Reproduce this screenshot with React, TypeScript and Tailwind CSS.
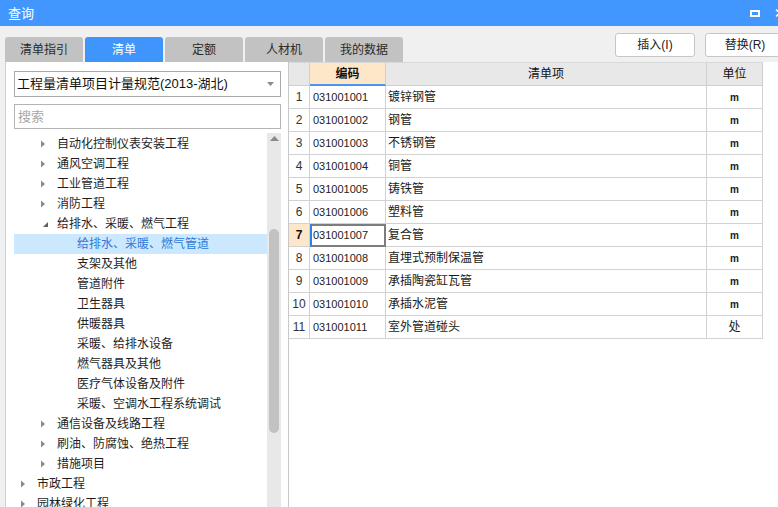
import React from "react";

type TreeItem = { label: string; level: number; arrow: "right" | "down" | "none"; selected?: boolean };

const tree: TreeItem[] = [
  { label: "自动化控制仪表安装工程", level: 2, arrow: "right" },
  { label: "通风空调工程", level: 2, arrow: "right" },
  { label: "工业管道工程", level: 2, arrow: "right" },
  { label: "消防工程", level: 2, arrow: "right" },
  { label: "给排水、采暖、燃气工程", level: 2, arrow: "down" },
  { label: "给排水、采暖、燃气管道", level: 3, arrow: "none", selected: true },
  { label: "支架及其他", level: 3, arrow: "none" },
  { label: "管道附件", level: 3, arrow: "none" },
  { label: "卫生器具", level: 3, arrow: "none" },
  { label: "供暖器具", level: 3, arrow: "none" },
  { label: "采暖、给排水设备", level: 3, arrow: "none" },
  { label: "燃气器具及其他", level: 3, arrow: "none" },
  { label: "医疗气体设备及附件", level: 3, arrow: "none" },
  { label: "采暖、空调水工程系统调试", level: 3, arrow: "none" },
  { label: "通信设备及线路工程", level: 2, arrow: "right" },
  { label: "刷油、防腐蚀、绝热工程", level: 2, arrow: "right" },
  { label: "措施项目", level: 2, arrow: "right" },
  { label: "市政工程", level: 1, arrow: "right" },
  { label: "园林绿化工程", level: 1, arrow: "right" },
];

const rows = [
  ["031001001", "镀锌钢管", "m"],
  ["031001002", "钢管", "m"],
  ["031001003", "不锈钢管", "m"],
  ["031001004", "铜管", "m"],
  ["031001005", "铸铁管", "m"],
  ["031001006", "塑料管", "m"],
  ["031001007", "复合管", "m"],
  ["031001008", "直埋式预制保温管", "m"],
  ["031001009", "承插陶瓷缸瓦管", "m"],
  ["031001010", "承插水泥管", "m"],
  ["031001011", "室外管道碰头", "处"],
];

const tabs = ["清单指引", "清单", "定额", "人材机", "我的数据"];

function Arrow({ kind }: { kind: TreeItem["arrow"] }) {
  if (kind === "right")
    return (
      <svg width="19" height="20" viewBox="0 0 19 20" className="shrink-0">
        <polygon points="3,6.5 7,10 3,13.5" fill="#8a8a8a" />
      </svg>
    );
  if (kind === "down")
    return (
      <svg width="19" height="20" viewBox="0 0 19 20" className="shrink-0">
        <polygon points="10,8 10,13 5,13" fill="#5f5f5f" />
      </svg>
    );
  return <div className="w-[19px] shrink-0" />;
}

export default function App() {
  return (
    <div className="w-[778px] h-[507px] overflow-hidden bg-[#f0f0f0] flex flex-col font-['Liberation_Sans','Noto_Sans_CJK_SC',sans-serif] text-[12px] text-[#1e1e1e]">
      {/* Title bar */}
      <div className="h-[26px] shrink-0 bg-[#4197fd] flex items-center">
        <span className="ml-[8px] text-white text-[13px] leading-none">查询</span>
        <div className="ml-auto mr-[-6px] flex items-center gap-[15px]">
          <div className="w-[10px] h-[7px] border-2 border-white" />
          <svg width="9" height="8" viewBox="0 0 9 8">
            <path d="M1 0.5 L8 7.5 M8 0.5 L1 7.5" stroke="white" strokeWidth="1.5" />
          </svg>
        </div>
      </div>

      {/* Tabs & buttons */}
      <div className="h-[36px] shrink-0 flex items-start">
        <div className="mt-[11px] ml-[5px] flex gap-[2px] shrink-0">
          {tabs.map((t, i) => (
            <div
              key={t}
              className={
                i === 1
                  ? "w-[78px] h-[25px] rounded-t-[3px] bg-[#3f95fb] text-white flex items-center justify-center text-[12px]"
                  : "w-[78px] h-[25px] rounded-t-[3px] bg-[#c2c2c2] text-[#2a2a2a] flex items-center justify-center text-[12px]"
              }
            >
              {t}
            </div>
          ))}
        </div>
        <div className="ml-[212px] mt-[7px] flex gap-[10px] shrink-0">
          <div className="w-[80px] h-[24px] bg-white border border-[#c6c6c6] rounded-[3px] flex items-center justify-center text-[12px] text-[#222]">
            插入(I)
          </div>
          <div className="w-[80px] h-[24px] bg-white border border-[#c6c6c6] rounded-[3px] flex items-center justify-center text-[12px] text-[#222]">
            替换(R)
          </div>
        </div>
      </div>

      {/* Main */}
      <div className="flex flex-1 min-h-0">
        {/* Left panel */}
        <div className="ml-[5px] w-[283px] shrink-0 bg-white border-l border-[#cfcfcf] flex flex-col pl-[8px] pr-[7px]">
          <div className="mt-[9px] h-[26px] shrink-0 border border-[#a9a9a9] flex items-center pl-[2px] pr-[6px] text-[13px] text-[#111]">
            <span>工程量清单项目计量规范(2013-湖北)</span>
            <svg width="7" height="4" viewBox="0 0 7 4" className="ml-auto">
              <polygon points="0,0 7,0 3.5,4" fill="#8a8a8a" />
            </svg>
          </div>
          <div className="mt-[7px] h-[25px] shrink-0 border border-[#b4b4b4] flex items-center pl-[3px] text-[13px] text-[#a8a8a8]">
            搜索
          </div>
          <div className="mt-[4px] flex flex-1 min-h-0 overflow-hidden">
            <div className="w-[253px] shrink-0 flex flex-col pt-[1px]">
              {tree.map((it, i) => (
                <div
                  key={i}
                  className={
                    "h-[20px] shrink-0 flex items-center " +
                    (it.selected ? "bg-[#cce8ff] text-[#2e79d6]" : "text-[#1e1e1e]")
                  }
                  style={{ paddingLeft: 4 + (it.level - 1) * 20 }}
                >
                  <Arrow kind={it.arrow} />
                  <span className="text-[12px] whitespace-nowrap">{it.label}</span>
                </div>
              ))}
            </div>
            <div className="w-[14px] shrink-0 bg-[#e8e8e8] flex flex-col items-center">
              <svg width="9" height="5" viewBox="0 0 9 5" className="mt-[3px]">
                <polygon points="0,5 9,5 4.5,0" fill="#8a8a8a" />
              </svg>
              <div className="mt-[88px] w-[10px] h-[204px] rounded-full bg-[#c2c2c2]" />
            </div>
          </div>
        </div>

        {/* Right panel */}
        <div className="flex-1 bg-white border-l border-[#c8c8c8] flex flex-col">
          {/* Header */}
          <div className="h-[24px] shrink-0 flex border-t border-[#d9d9d9] w-[474px]">
            <div className="w-[21px] bg-[#e8e8e8] border-r border-b border-[#cfcfcf]" />
            <div className="w-[76px] bg-[#fde7c8] border-r border-[#cfcfcf] border-b-2 border-b-[#4a95f0] flex items-center justify-center font-bold text-[12px] text-[#111]">
              编码
            </div>
            <div className="w-[321px] bg-[#e8e8e8] border-r border-b border-[#cfcfcf] flex items-center justify-center text-[12px] text-[#111]">
              清单项
            </div>
            <div className="w-[56px] bg-[#e8e8e8] border-r border-b border-[#cfcfcf] flex items-center justify-center text-[12px] text-[#111]">
              单位
            </div>
          </div>
          {rows.map((r, i) => {
            const sel = i === 6;
            return (
              <div key={r[0]} className="h-[23px] shrink-0 flex w-[474px]">
                <div
                  className={
                    "w-[21px] border-r border-b border-[#d2d2d2] flex items-center justify-center text-[12px] " +
                    (sel ? "bg-[#fde7c8] font-bold text-[#111]" : "text-[#333]")
                  }
                >
                  {i + 1}
                </div>
                <div
                  className={
                    sel
                      ? "w-[76px] border-2 border-[#7d7d7d] border-l-[#2a7ff5] flex items-center pl-[1px] text-[11px] text-[#222]"
                      : "w-[76px] border-r border-b border-[#d2d2d2] flex items-center pl-[3px] text-[11px] text-[#222]"
                  }
                >
                  {r[0]}
                </div>
                <div className="w-[321px] border-r border-b border-[#d2d2d2] flex items-center pl-[2px] text-[12px] text-[#1a1a1a]">
                  {r[1]}
                </div>
                <div
                  className={
                    "w-[56px] border-r border-b border-[#d2d2d2] flex items-center justify-center text-[#1a1a1a] " +
                    (r[2] === "m" ? "text-[10px] font-bold" : "text-[12px]")
                  }
                >
                  {r[2]}
                </div>
              </div>
            );
          })}
        </div>
      </div>
    </div>
  );
}
